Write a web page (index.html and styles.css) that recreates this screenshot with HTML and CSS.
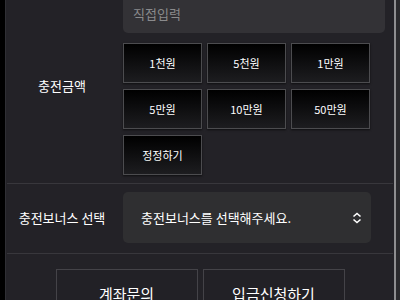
FILE: index.html
```html
<!DOCTYPE html>
<html>

	<head>
		<meta charset="UTF-8">
		<title>충전신청</title>
		<link rel="stylesheet" href="styles.css">
	</head>

	<body>
		<div class="wrap">
			<div class="row">
				<div class="label">충전금액</div>
				<div class="field">
					<div class="input">직접입력</div>
					<div class="amounts">
						<div class="btn">1천원</div>
						<div class="btn">5천원</div>
						<div class="btn">1만원</div>
						<div class="btn">5만원</div>
						<div class="btn">10만원</div>
						<div class="btn">50만원</div>
						<div class="btn">정정하기</div>
					</div>
				</div>
			</div>
			<div class="row row2">
				<div class="label">충전보너스 선택</div>
				<div class="field">
					<div class="select">
						<span>충전보너스를 선택해주세요.</span>
						<svg width="10" height="12" viewBox="0 0 10 12">
							<path d="M1.5 4.5 L5 1.5 L8.5 4.5 M1.5 7.5 L5 10.5 L8.5 7.5" fill="none" stroke="#fff" stroke-width="1.6"/>
						</svg>
					</div>
				</div>
			</div>
			<div class="foot">
				<div class="big">계좌문의</div>
				<div class="big">입금신청하기</div>
			</div>
		</div>
	</body>

</html>
```

FILE: styles.css
```css
* {
	margin: 0;
	padding: 0;
	box-sizing: border-box;
}

body {
	background: linear-gradient(to right, #000 5px, #2a2a2d 5px);
	font-family: "Noto Sans CJK KR", "Noto Sans", sans-serif;
	color: #fff;
	overflow: hidden;
}

.wrap {
	margin-left: 5px;
	margin-top: -5px;
	width: 391px;
	height: 320px;
	background-color: #232227;
	border-left: 1px solid #2f2f34;
	border-right: 2px solid #8e8e90;
}

.row {
	display: flex;
	align-items: center;
	margin: 0 1px;
	padding-bottom: 8px;
	border-bottom: 1px solid #38373c;
}

.row2 {
	padding: 8px 0 10px;
}

.label {
	width: 110px;
	margin-right: 6px;
	text-align: center;
	font-size: 13px;
}

.field {
	flex: 1;
	padding-right: 8px;
}

.input {
	height: 38px;
	line-height: 38px;
	padding-left: 10px;
	background-color: #333236;
	border-radius: 5px;
	color: #8a8a8c;
	font-size: 13px;
	margin-bottom: 10px;
}

.amounts {
	display: grid;
	grid-template-columns: repeat(3, 79px);
	grid-auto-rows: 40px;
	column-gap: 5px;
	row-gap: 6px;
}

.btn {
	background: linear-gradient(#000, #1d1d20);
	border: 1px solid #4c4c4f;
	box-shadow: 0 1px 2px rgba(0, 0, 0, 0.6);
	line-height: 38px;
	text-align: center;
	font-size: 11px;
}

.select {
	width: 248px;
	height: 51px;
	background-color: #2f2f31;
	border-radius: 5px;
	display: flex;
	align-items: center;
	justify-content: space-between;
	padding: 0 9px 0 18px;
	font-size: 13px;
}

.foot {
	display: flex;
	justify-content: center;
	gap: 5px;
	padding-top: 15px;
}

.big {
	width: 142px;
	height: 50px;
	line-height: 48px;
	text-align: center;
	border: 1px solid #444348;
	background-color: #222126;
	font-size: 15px;
}
```
